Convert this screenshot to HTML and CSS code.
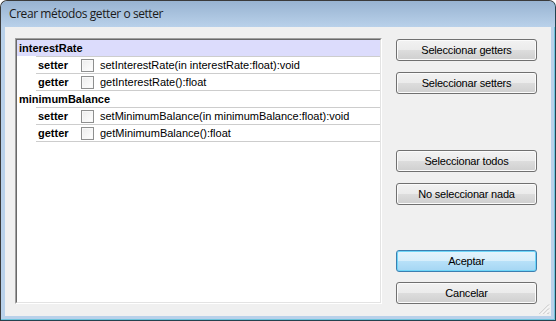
FILE: index.html
```html
<!DOCTYPE html>
<html lang="es">
<head>
<meta charset="utf-8">
<title>Crear métodos getter o setter</title>
<link rel="stylesheet" href="styles.css">
</head>
<body>
<div class="window">
  <div class="titlebar"><span class="title">Crear métodos getter o setter</span></div>
  <div class="frame">
    <div class="content">
      <div class="listbox">
        <div class="listinner">
          <div class="prop selected">interestRate</div>
          <div class="accessors">
            <div class="acc"><span class="kind">setter</span><span class="check"></span><span class="sig">setInterestRate(in interestRate:float):void</span></div>
            <div class="acc"><span class="kind">getter</span><span class="check"></span><span class="sig">getInterestRate():float</span></div>
          </div>
          <div class="prop">minimumBalance</div>
          <div class="accessors">
            <div class="acc"><span class="kind">setter</span><span class="check"></span><span class="sig">setMinimumBalance(in minimumBalance:float):void</span></div>
            <div class="acc"><span class="kind">getter</span><span class="check"></span><span class="sig">getMinimumBalance():float</span></div>
          </div>
        </div>
      </div>
      <div class="buttons">
        <div class="group group-top">
          <button class="btn">Seleccionar getters</button>
          <button class="btn">Seleccionar setters</button>
        </div>
        <div class="group group-mid">
          <button class="btn">Seleccionar todos</button>
          <button class="btn">No seleccionar nada</button>
        </div>
        <div class="group group-bottom">
          <button class="btn btn-default">Aceptar</button>
          <button class="btn">Cancelar</button>
        </div>
      </div>
      <svg class="grip" width="12" height="12" viewBox="0 0 12 12">
        <g stroke-width="1">
          <line x1="11" y1="1.5" x2="1.5" y2="11" stroke="#b8b8b8"/>
          <line x1="11" y1="2.5" x2="2.5" y2="11" stroke="#ffffff"/>
          <line x1="11" y1="5.5" x2="5.5" y2="11" stroke="#b8b8b8"/>
          <line x1="11" y1="6.5" x2="6.5" y2="11" stroke="#ffffff"/>
          <line x1="11" y1="9.5" x2="9.5" y2="11" stroke="#b8b8b8"/>
        </g>
      </svg>
    </div>
  </div>
</div>
</body>
</html>
```

FILE: styles.css
```css
html, body {
  margin: 0;
  padding: 0;
  width: 556px;
  height: 321px;
  overflow: hidden;
  background: #ffffff;
}

.window {
  box-sizing: border-box;
  width: 556px;
  height: 321px;
  border: 1px solid #3a3a3a;
  border-right-color: #24424f;
  border-bottom-color: #24424f;
  border-radius: 7px 7px 0 0;
  background: #b9d1ea;
  display: flex;
  flex-direction: column;
  overflow: hidden;
  box-shadow: inset -1px -1px 0 #6fc4dc;
}

.titlebar {
  height: 26px;
  flex: none;
  display: flex;
  align-items: center;
  padding-left: 8px;
  background: linear-gradient(#98b3d1, #b9d1ea);
  border-radius: 6px 6px 0 0;
}

.title {
  font-family: "Open Sans", "Noto Sans", sans-serif;
  font-size: 12px;
  line-height: 16px;
  letter-spacing: -0.42px;
  color: #1a1a1a;
}

.frame {
  flex: 1;
  display: flex;
  padding: 0 4px 4px 4px;
}

.content {
  flex: 1;
  position: relative;
  display: flex;
  gap: 14px;
  padding: 11px 14px 12px 10px;
  background: #f0f0f0;
}

.listbox {
  box-sizing: border-box;
  width: 367px;
  border: 1px solid;
  border-color: #a0a0a0 #ffffff #ffffff #a0a0a0;
}

.listinner {
  box-sizing: border-box;
  height: 100%;
  border: 1px solid;
  border-color: #696969 #e3e3e3 #e3e3e3 #696969;
  background: #ffffff;
  font-family: "Liberation Sans", Arial, sans-serif;
  font-size: 11px;
  color: #000000;
}

.prop {
  height: 16px;
  line-height: 16px;
  padding-left: 2px;
  font-weight: bold;
}

.selected {
  background: #dcdcfc;
}

.accessors {
  margin-left: 19px;
  border-top: 1px solid #cdcdcd;
}

.acc {
  height: 16px;
  display: flex;
  align-items: center;
  border-bottom: 1px solid #cdcdcd;
  white-space: nowrap;
}

.kind {
  box-sizing: border-box;
  width: 45px;
  padding-left: 2px;
  font-weight: bold;
  line-height: 16px;
}

.check {
  box-sizing: border-box;
  width: 13px;
  height: 13px;
  margin-right: 6px;
  border: 1px solid #8e8f8f;
  background: linear-gradient(135deg, #ececec, #ffffff);
  box-shadow: inset 0 0 0 1px #f8f8f8;
}

.sig {
  line-height: 16px;
}

.buttons {
  width: 141px;
  display: flex;
  flex-direction: column;
}

.group {
  display: flex;
  flex-direction: column;
  gap: 11px;
}

.group-top {
  margin-top: 1px;
}

.group-mid {
  margin-top: 56px;
}

.group-bottom {
  margin-top: auto;
  gap: 10px;
}

.btn {
  box-sizing: border-box;
  height: 22px;
  width: 141px;
  margin: 0;
  padding: 0;
  border: 1px solid #707070;
  border-radius: 3px;
  background: linear-gradient(#f2f2f2 0%, #ebebeb 50%, #dddddd 50%, #cfcfcf 100%);
  box-shadow: inset 0 0 0 1px #fbfbfb;
  font-family: "Liberation Sans", Arial, sans-serif;
  font-size: 11px;
  letter-spacing: -0.2px;
  color: #000000;
  text-align: center;
}

.btn-default {
  border-color: #3c7fb1;
  background: linear-gradient(#e5f4fc 0%, #d6eefb 50%, #b8e1f8 50%, #a4d6f3 100%);
  box-shadow: inset 0 0 0 1px #6fd6f8;
}

.grip {
  position: absolute;
  right: 1px;
  bottom: 1px;
}
```
